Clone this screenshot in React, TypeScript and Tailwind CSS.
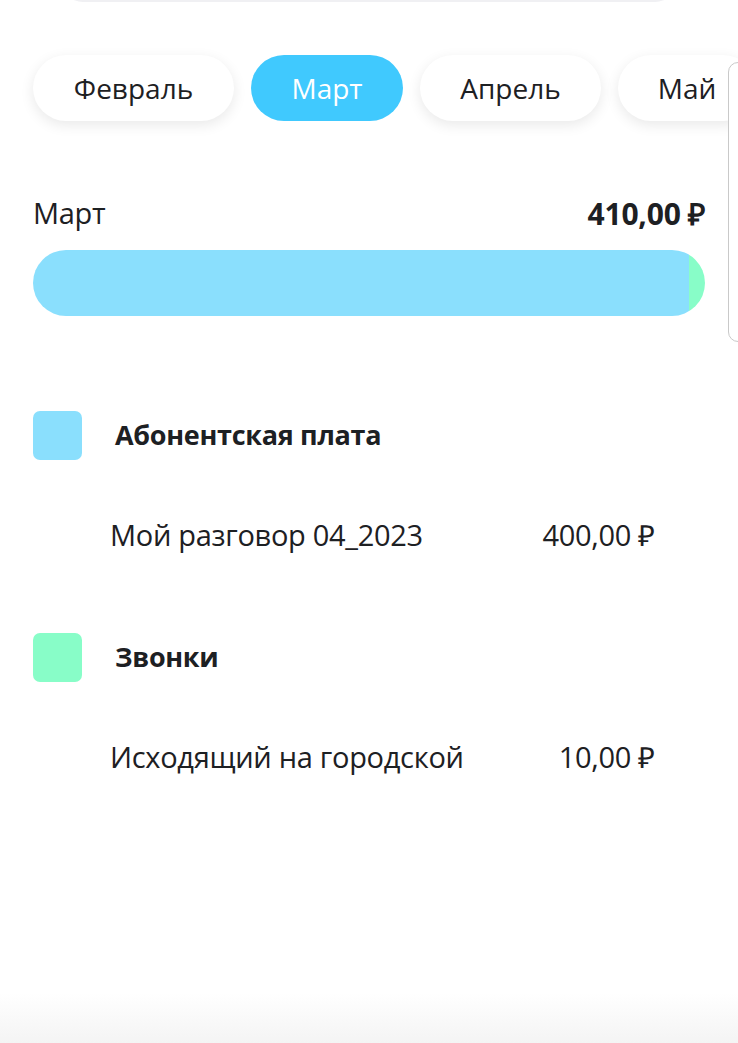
import React from 'react';

interface Item {
  name: string;
  amount: string;
}

interface Category {
  title: string;
  color: string;
  items: Item[];
}

const months = [
  { label: 'Февраль', width: 'w-[201px]', active: false },
  { label: 'Март', width: 'w-[152px]', active: true },
  { label: 'Апрель', width: 'w-[181px]', active: false },
  { label: 'Май', width: 'w-[138px]', active: false },
];

const categories: Category[] = [
  {
    title: 'Абонентская плата',
    color: 'bg-[#8adffd]',
    items: [{ name: 'Мой разговор 04_2023', amount: '400,00 ₽' }],
  },
  {
    title: 'Звонки',
    color: 'bg-[#88fdc8]',
    items: [{ name: 'Исходящий на городской', amount: '10,00 ₽' }],
  },
];

const total = 410;
const subscription = 400;

const App: React.FC = () => {
  return (
    <div className="relative h-[1043px] w-[738px] overflow-hidden bg-white font-['Open_Sans',sans-serif] text-[#1d2023]">
      {/* bottom of the card above */}
      <div className="mx-[61px] -mt-[22px] h-[24px] rounded-b-[22px] border-b-2 border-[#f0f0f3] bg-white" />

      {/* Month pills */}
      <div className="mt-[53px] flex gap-[17px] pl-[33px] pb-[10px]">
        {months.map((m) => (
          <div
            key={m.label}
            className={`flex h-[66px] shrink-0 items-center justify-center rounded-full text-[28px] ${m.width} ${
              m.active
                ? 'bg-[#40c9fe] text-white'
                : 'bg-white text-[#1d2023] shadow-[0_4px_14px_rgba(0,0,0,0.09)]'
            }`}
          >
            {m.label}
          </div>
        ))}
      </div>

      {/* Summary */}
      <div className="mt-[64px] flex h-[36px] items-center justify-between pl-[33px] pr-[33px]">
        <span className="text-[29px] tracking-[-0.3px]">Март</span>
        <span className="text-[30px] font-bold tracking-[-0.2px]">410,00 ₽</span>
      </div>
      <div className="mx-[33px] mt-[19px] flex h-[66px] overflow-hidden rounded-full">
        <div className="h-full bg-[#8adffd]" style={{ width: `${(subscription / total) * 100}%` }} />
        <div className="h-full flex-1 bg-[#88fdc8]" />
      </div>

      {/* Categories */}
      {categories.map((c, i) => (
        <div key={c.title} className={i === 0 ? 'mt-[94px]' : 'mt-[79px]'}>
          <div className="flex h-[50px] items-center gap-[33px] pl-[33px]">
            <div className={`h-[49px] w-[49px] rounded-[7px] ${c.color}`} />
            <span className="text-[27px] font-bold tracking-[-0.3px]">{c.title}</span>
          </div>
          {c.items.map((it) => (
            <div key={it.name} className="mt-[57px] flex h-[36px] items-center justify-between pl-[110px] pr-[83px]">
              <span className="text-[29px] tracking-[-0.3px]">{it.name}</span>
              <span className="text-[29px] tracking-[-0.3px]">{it.amount}</span>
            </div>
          ))}
        </div>
      ))}

      {/* side handle overlay */}
      <div className="absolute left-[728px] top-[62px] h-[280px] w-[40px] rounded-l-[10px] border border-[#c9c9c9] bg-white" />

      {/* bottom fade */}
      <div className="absolute bottom-0 left-0 h-[50px] w-full bg-linear-to-b from-white to-[#f4f4f4]" />
    </div>
  );
};

export default App;
